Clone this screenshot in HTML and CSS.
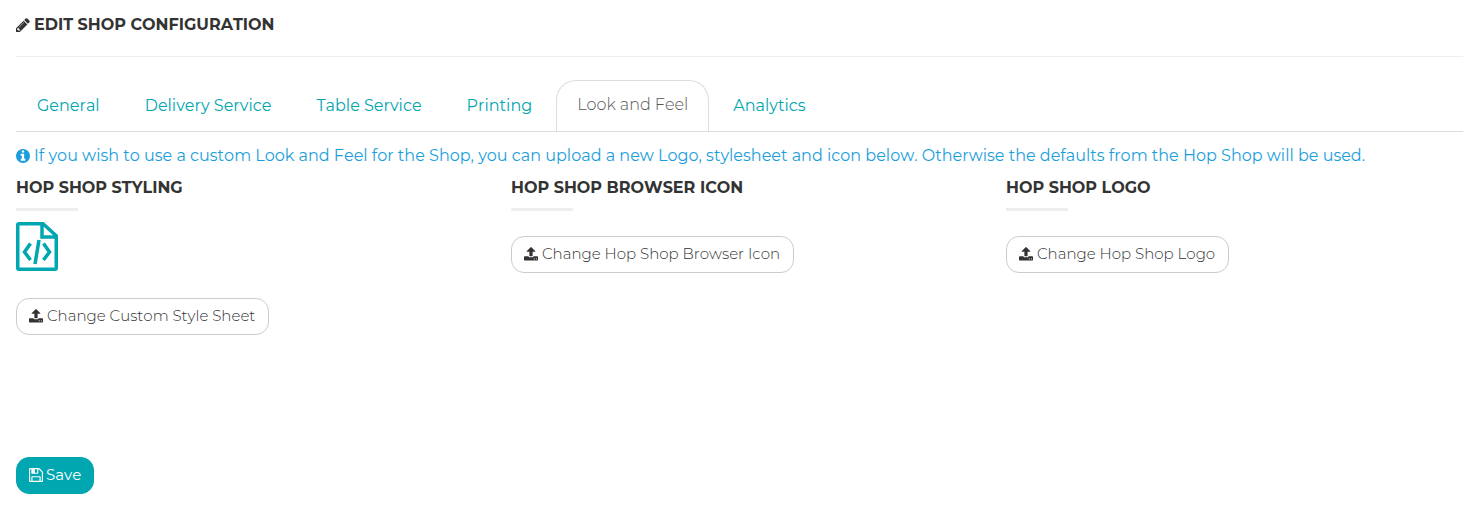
FILE: index.html
```html
<!DOCTYPE html>
<html lang="en">
<head>
<meta charset="utf-8">
<title>Edit Shop Configuration</title>
<link rel="stylesheet" href="styles.css">
</head>
<body>
<svg class="sprite" aria-hidden="true">
  <symbol id="upload" viewBox="64 64 1664 1664"><path d="M1344 1472q0-26-19-45t-45-19-45 19-19 45 19 45 45 19 45-19 19-45zm256 0q0-26-19-45t-45-19-45 19-19 45 19 45 45 19 45-19 19-45zm128-224v320q0 40-28 68t-68 28h-1472q-40 0-68-28t-28-68v-320q0-40 28-68t68-28h427q21 56 70.5 92t110.5 36h256q61 0 110.5-36t70.5-92h427q40 0 68 28t28 68zm-325-648q-17 40-59 40h-256v448q0 26-19 45t-45 19h-256q-26 0-45-19t-19-45v-448h-256q-42 0-59-40-17-39 14-69l448-448q18-19 45-19t45 19l448 448q31 30 14 69z"/></symbol>
</svg>
<main class="page">
  <h1 class="page-title">
    <svg class="icon" viewBox="128 128 1536 1536" aria-hidden="true"><path d="M491 1536l91-91-235-235-91 91v107h128v128h107zm523-928q0-22-22-22-10 0-17 7l-542 542q-7 7-7 17 0 22 22 22 10 0 17-7l542-542q7-7 7-17zm-54-192l416 416-832 832h-416v-416zm683 96q0 53-37 90l-166 166-416-416 166-165q36-38 90-38 53 0 91 38l235 234q37 39 37 91z"/></svg>
    <span>EDIT SHOP CONFIGURATION</span>
  </h1>
  <nav class="tabs">
    <a class="tab" href="#general">General</a>
    <a class="tab" href="#delivery">Delivery Service</a>
    <a class="tab" href="#table">Table Service</a>
    <a class="tab" href="#printing">Printing</a>
    <a class="tab tab-active" href="#look" aria-current="page">Look and Feel</a>
    <a class="tab" href="#analytics">Analytics</a>
  </nav>
  <p class="info">
    <svg class="icon" viewBox="128 128 1536 1536" aria-hidden="true"><path d="M1152 1376v-160q0-14-9-23t-23-9h-96v-512q0-14-9-23t-23-9h-320q-14 0-23 9t-9 23v160q0 14 9 23t23 9h96v320h-96q-14 0-23 9t-9 23v160q0 14 9 23t23 9h448q14 0 23-9t9-23zm-128-896v-160q0-14-9-23t-23-9h-192q-14 0-23 9t-9 23v160q0 14 9 23t23 9h192q14 0 23-9t9-23zm640 416q0 209-103 385.5t-279.5 279.5-385.5 103-385.5-103-279.5-279.5-103-385.5 103-385.5 279.5-279.5 385.5-103 385.5 103 279.5 279.5 103 385.5z"/></svg>
    <span>If you wish to use a custom Look and Feel for the Shop, you can upload a new Logo, stylesheet and icon below. Otherwise the defaults from the Hop Shop will be used.</span>
  </p>
  <div class="columns">
    <section class="column">
      <h2 class="section-title">HOP SHOP STYLING</h2>
      <svg class="file-icon" viewBox="0 0 42 49" aria-hidden="true">
        <path d="M1.750 3q0-1.250 1.250-1.250h24l13.250 12v32.250q0 1.250-1.250 1.250H3q-1.250 0-1.250-1.250zM26 2v13h14M14.500 21.500L8.500 30l6 8M27.500 21.500l6 8.500-6 8M23 18l-4 24"/>
      </svg>
      <button class="button" type="button"><svg class="icon" aria-hidden="true"><use href="#upload"/></svg><span>Change Custom Style Sheet</span></button>
    </section>
    <section class="column">
      <h2 class="section-title">HOP SHOP BROWSER ICON</h2>
      <button class="button" type="button"><svg class="icon" aria-hidden="true"><use href="#upload"/></svg><span>Change Hop Shop Browser Icon</span></button>
    </section>
    <section class="column">
      <h2 class="section-title">HOP SHOP LOGO</h2>
      <button class="button" type="button"><svg class="icon" aria-hidden="true"><use href="#upload"/></svg><span>Change Hop Shop Logo</span></button>
    </section>
  </div>
  <button class="button button-primary" type="submit"><svg class="icon" viewBox="128 128 1536 1536" aria-hidden="true"><path d="M512 1536h768v-384h-768v384zm896 0h128v-896q0-14-10-38.500t-20-34.500l-281-281q-10-10-34-20t-39-10v416q0 40-28 68t-68 28h-576q-40 0-68-28t-28-68v-416h-128v1280h128v-416q0-40 28-68t68-28h832q40 0 68 28t28 68v416zm-384-928v-320q0-13-9.500-22.500t-22.500-9.500h-192q-13 0-22.500 9.500t-9.500 22.500v320q0 13 9.500 22.500t22.500 9.500h192q13 0 22.500-9.500t9.500-22.500zm640 32v928q0 40-28 68t-68 28h-1344q-40 0-68-28t-28-68v-1344q0-40 28-68t68-28h928q40 0 88 20t76 48l280 280q28 28 48 76t20 88z"/></svg><span>Save</span></button>
</main>
</body>
</html>
```
FILE: styles.css
```css
* { box-sizing: border-box; }
body {
  margin: 0;
  background: #fff;
  color: #333;
  font-family: Montserrat, Inter, "Open Sans", sans-serif;
  font-size: 16px;
  font-kerning: none;
  line-height: 24px;
}
.sprite { display: none; }
.page { padding: 13px 18px 12px 16px; }
.icon { width: 14px; height: 14px; flex: none; fill: currentColor; }
.page-title {
  display: flex;
  align-items: center;
  gap: 4px;
  margin: 0 0 23px;
  padding-bottom: 19px;
  border-bottom: 1px solid #eee;
  font-size: 16px;
  font-weight: 700;
}
.tabs {
  display: flex;
  gap: 3px;
  border-bottom: 1px solid #ddd;
}
.tab {
  padding: 13px 20px;
  border: 1px solid transparent;
  border-bottom: 0;
  border-radius: 20px 20px 0 0;
  color: #00a6b0;
  text-decoration: none;
  white-space: nowrap;
}
.tab-active {
  padding: 12px 20px 13px;
  border-color: #ddd;
  color: #555;
  font-weight: 300;
}
.info {
  display: flex;
  align-items: center;
  gap: 4px;
  margin: 12px 0 8px;
  color: #1b9edb;
}
.columns {
  display: grid;
  grid-template-columns: repeat(3, 1fr);
  gap: 38px;
  margin-bottom: 122px;
}
.column {
  display: flex;
  flex-direction: column;
  align-items: flex-start;
}
.section-title {
  margin: 0 0 25px;
  font-size: 16px;
  font-weight: 700;
}
.section-title::after {
  content: "";
  display: block;
  width: 62px;
  height: 3px;
  margin-top: 8px;
  background: #eee;
}
.file-icon {
  width: 42px;
  height: 49px;
  margin: -14px 0 27px;
  fill: none;
  stroke: #00a6b0;
  stroke-width: 3.5;
}
.button {
  display: inline-flex;
  align-items: center;
  gap: 4px;
  padding: 5px 13px 7px 12px;
  border: 1px solid #ccc;
  border-radius: 13px;
  background: #fff;
  color: #333;
  font-family: inherit;
  font-size: 15px;
  font-kerning: inherit;
  font-weight: 300;
  line-height: 23px;
  white-space: nowrap;
}
.button-primary {
  gap: 3px;
  padding-right: 12px;
  border-color: #00a6b0;
  background: #00a6b0;
  color: #fff;
  font-weight: 400;
}
```
